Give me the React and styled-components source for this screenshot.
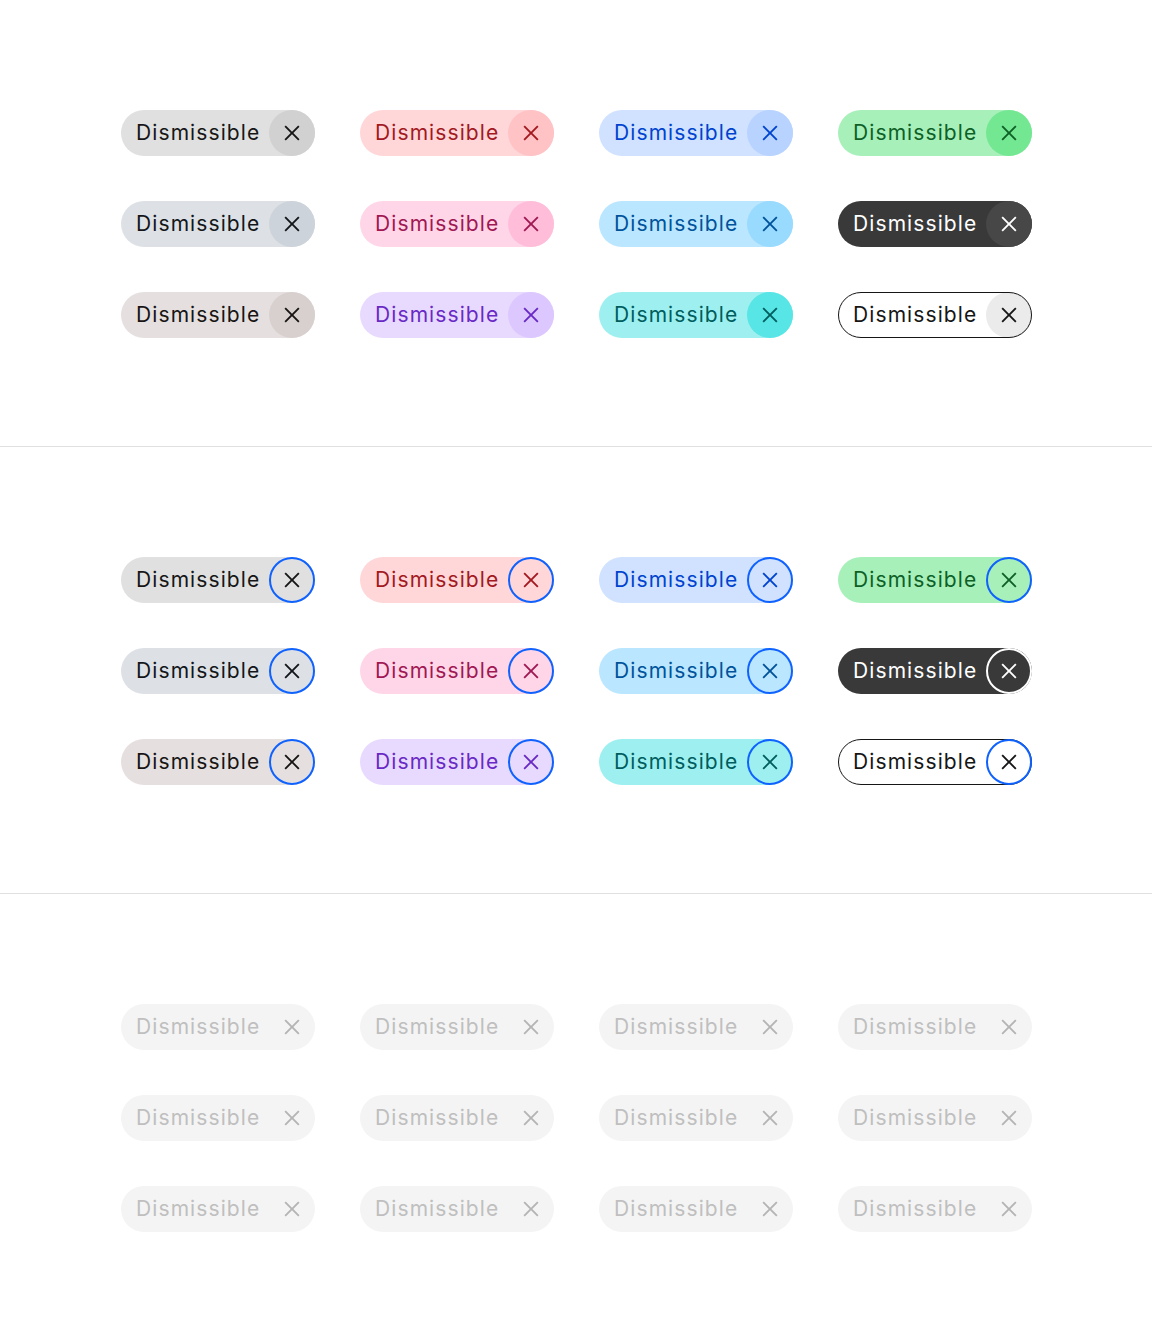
import React from 'react';
import styled, { createGlobalStyle, css } from 'styled-components';

const GlobalStyle = createGlobalStyle`
    html, body {
        margin: 0;
        padding: 0;
        background: #ffffff;
    }

    body {
        font-family: 'Inter', 'Noto Sans', sans-serif;
        -webkit-font-smoothing: antialiased;
    }
`;

const palettes = {
    gray: { bg: '#e0e0e0', fg: '#161616', hover: '#d1d1d1' },
    coolGray: { bg: '#dde1e6', fg: '#121619', hover: '#cdd3da' },
    warmGray: { bg: '#e5e0df', fg: '#171414', hover: '#d8d0cf' },
    red: { bg: '#ffd7d9', fg: '#a2191f', hover: '#ffc2c5' },
    magenta: { bg: '#ffd6e8', fg: '#9f1853', hover: '#ffbdda' },
    purple: { bg: '#e8daff', fg: '#6929c4', hover: '#dcc7ff' },
    blue: { bg: '#d0e2ff', fg: '#0043ce', hover: '#b8d3ff' },
    cyan: { bg: '#bae6ff', fg: '#00539a', hover: '#99daff' },
    teal: { bg: '#9ef0f0', fg: '#005d5d', hover: '#57e5e5' },
    green: { bg: '#a7f0ba', fg: '#0e6027', hover: '#74e792' },
    highContrast: { bg: '#393939', fg: '#ffffff', hover: '#474747', ring: '#ffffff' },
    outline: { bg: '#ffffff', fg: '#161616', hover: '#ebebeb', border: '#161616' },
};

// reading order of the grid: row by row, four columns
const order = [
    'gray', 'red', 'blue', 'green',
    'coolGray', 'magenta', 'cyan', 'highContrast',
    'warmGray', 'purple', 'teal', 'outline',
];

const sections = ['hover', 'focus', 'disabled'];

const Section = styled.section`
    padding: 110px 0 108px;
    border-bottom: 1px solid #e0e0e0;

    &:last-child {
        border-bottom: none;
    }
`;

const Grid = styled.div`
    display: grid;
    grid-template-columns: repeat(4, 193px);
    column-gap: 46px;
    row-gap: 45px;
    justify-content: center;
`;

const Tag = styled.div`
    position: relative;
    display: inline-flex;
    align-items: center;
    justify-self: start;
    height: 46px;
    padding-left: 15px;
    border-radius: 23px;
    background: ${(p) => (p.$disabled ? '#f4f4f4' : p.$palette.bg)};
    color: ${(p) => (p.$disabled ? '#bfbfbf' : p.$palette.fg)};

    ${(p) =>
        p.$palette.border &&
        !p.$disabled &&
        css`
            &::after {
                content: '';
                position: absolute;
                inset: 0;
                border: 1.5px solid ${p.$palette.border};
                border-radius: 23px;
                pointer-events: none;
                z-index: 1;
            }
        `}
`;

const Label = styled.span`
    font-size: 21px;
    font-weight: 400;
    letter-spacing: 1.1px;
    line-height: 46px;
    white-space: nowrap;
`;

const Close = styled.button`
    position: relative;
    display: flex;
    align-items: center;
    justify-content: center;
    width: 46px;
    height: 46px;
    margin-left: 9px;
    padding: 0;
    border: none;
    border-radius: 50%;
    background: transparent;
    color: inherit;
    cursor: pointer;
    box-sizing: border-box;

    &:disabled {
        color: #b4b4b4;
        cursor: default;
    }

    ${(p) =>
        p.$state === 'hover' &&
        css`
            background: ${p.$palette.hover};
        `}

    ${(p) =>
        p.$state === 'focus' &&
        css`
            z-index: 2;
            background: ${p.$palette.bg};
            border: 2px solid ${p.$palette.ring || '#0f62fe'};
        `}
`;

const CloseIcon = () => (
    <svg width="30" height="30" viewBox="0 0 32 32" fill="currentColor" aria-hidden="true">
        <path d="M17.4141 16L24 9.4141 22.5859 8 16 14.5859 9.4143 8 8 9.4141 14.5859 16 8 22.5859 9.4143 24 16 17.4141 22.5859 24 24 22.5859 17.4141 16z" />
    </svg>
);

const DismissibleTag = ({ kind, state }) => {
    const palette = palettes[kind];
    const disabled = state === 'disabled';

    return (
        <Tag $palette={palette} $disabled={disabled}>
            <Label>Dismissible</Label>
            <Close $palette={palette} $state={state} disabled={disabled} aria-label="Dismiss">
                <CloseIcon />
            </Close>
        </Tag>
    );
};

const App = () => (
    <>
        <GlobalStyle />
        {sections.map((state) => (
            <Section key={state}>
                <Grid>
                    {order.map((kind) => (
                        <DismissibleTag key={kind} kind={kind} state={state} />
                    ))}
                </Grid>
            </Section>
        ))}
    </>
);

export default App;
